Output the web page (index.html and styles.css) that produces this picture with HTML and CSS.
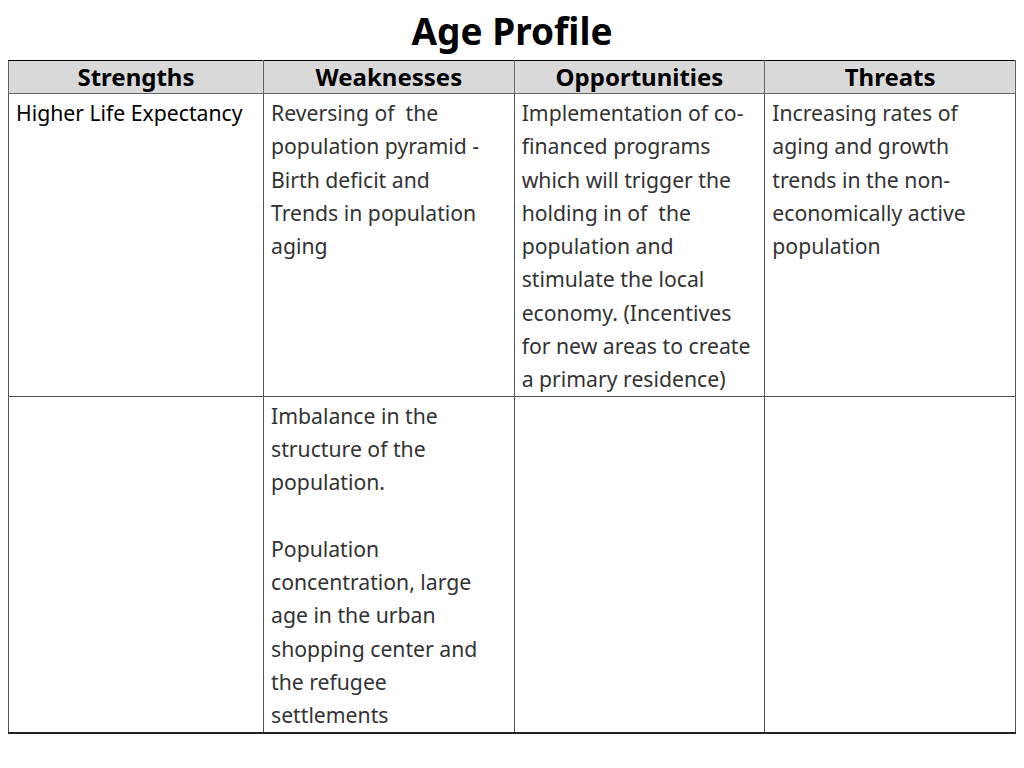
FILE: index.html
```html
<!DOCTYPE html>
<html lang="en">
<head>
  <meta charset="UTF-8">
  <title>Age Profile</title>
  <link rel="stylesheet" href="styles.css">
</head>
<body>

<div class="swot-page">
  <h1 class="swot-title">Age Profile</h1>

  <table class="swot-table">
    <colgroup>
      <col class="col-first">
      <col>
      <col>
      <col>
    </colgroup>
    <thead>
      <tr>
        <th>Strengths</th>
        <th>Weaknesses</th>
        <th>Opportunities</th>
        <th>Threats</th>
      </tr>
    </thead>
    <tbody>
      <tr>
        <td class="strong-cell">Higher Life Expectancy</td>
        <td>Reversing of&nbsp; the population pyramid - Birth deficit and Trends in population aging</td>
        <td>Implementation of co-financed programs which will trigger the holding in of&nbsp; the population and stimulate the local economy. (Incentives for new areas to create a primary residence)</td>
        <td>Increasing rates of aging and growth trends in the non-economically active population</td>
      </tr>
      <tr>
        <td class="strong-cell"></td>
        <td>Imbalance in the structure of the population.<br><br>Population concentration, large age in the urban shopping center and the refugee settlements</td>
        <td></td>
        <td></td>
      </tr>
    </tbody>
  </table>
</div>

</body>
</html>
```

FILE: styles.css
```css
/* Reset */
* {
  box-sizing: border-box;
  margin: 0;
  padding: 0;
}
html, body {
  background: #fff;
  font-family: 'Noto Sans', 'Open Sans', sans-serif;
  color: #000;
}

/* Page wrapper */
.swot-page {
  padding: 8px 8px 0 8px;
}

.swot-title {
  font-size: 37px;
  font-weight: 700;
  text-align: center;
  line-height: 46px;
  margin-bottom: 6px;
}

/* SWOT table */
.swot-table {
  width: 1008px;
  border-collapse: collapse;
  table-layout: fixed;
  border: 1px solid #000;
  border-bottom: 2px solid #222;
}
.swot-table .col-first {
  width: 255px;
}
.swot-table th {
  background: #d9d9d9;
  font-size: 24px;
  font-weight: 700;
  height: 33px;
  line-height: 30px;
  padding: 0 7px;
  border: 1px solid #666;
  border-top-color: #000;
  text-align: center;
}
.swot-table td {
  vertical-align: top;
  font-size: 21.2px;
  line-height: 33.3px;
  padding: 2px 12px 0 7px;
  color: #333;
  border: 1px solid #555;
}
.swot-table td.strong-cell {
  color: #000;
}
```
